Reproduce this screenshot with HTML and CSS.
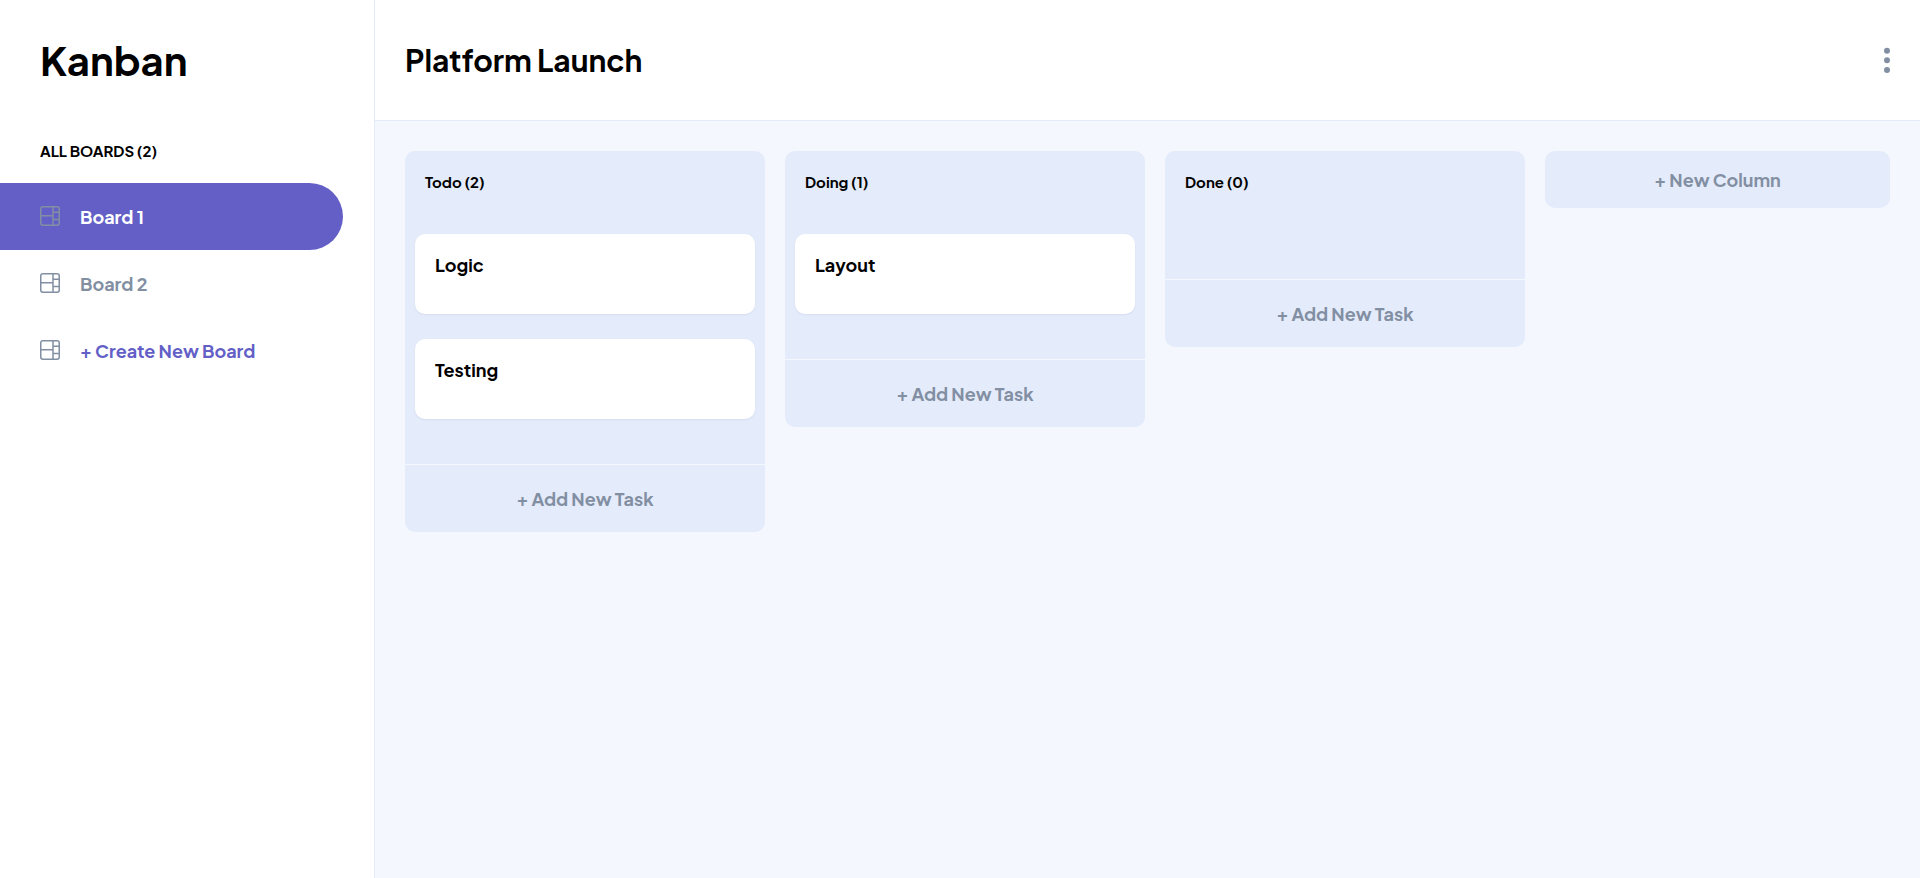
FILE: index.html
```
<!DOCTYPE html>
<html lang="en">
<head>
  <meta charset="utf-8">
  <title>Kanban</title>
  <link rel="stylesheet" href="styles.css">
</head>
<body>
  <svg width="0" height="0" class="sprite" aria-hidden="true">
    <symbol id="board-icon" viewBox="0 0 20 20">
      <rect x="0.75" y="0.75" width="18.5" height="18.5" rx="2.2"/>
      <path d="M13 0.7v18.6M0.7 9.7H13M13 6.2h6.3M13 13.6h6.3"/>
    </symbol>
  </svg>
  <div class="app">
    <aside class="sidebar">
      <h1 class="logo">Kanban</h1>
      <h2 class="boards-title">ALL BOARDS (2)</h2>
      <nav class="boards">
        <a class="board board--active"><svg class="board-icon"><use href="#board-icon"/></svg><span>Board 1</span></a>
        <a class="board"><svg class="board-icon"><use href="#board-icon"/></svg><span>Board 2</span></a>
        <a class="board board--create"><svg class="board-icon"><use href="#board-icon"/></svg><span>+ Create New Board</span></a>
      </nav>
    </aside>
    <div class="main">
      <header class="topbar">
        <h2 class="topbar-title">Platform Launch</h2>
        <svg class="menu" width="6" height="26" viewBox="0 0 6 26">
          <circle cx="3" cy="3.7" r="3"/><circle cx="3" cy="13.3" r="3"/><circle cx="3" cy="22.9" r="3"/>
        </svg>
      </header>
      <main class="columns">
        <section class="column">
          <h3 class="column-title">Todo (2)</h3>
          <div class="cards">
            <article class="card">Logic</article>
            <article class="card">Testing</article>
          </div>
          <button class="add-task">+ Add New Task</button>
        </section>
        <section class="column">
          <h3 class="column-title">Doing (1)</h3>
          <div class="cards">
            <article class="card">Layout</article>
          </div>
          <button class="add-task">+ Add New Task</button>
        </section>
        <section class="column">
          <h3 class="column-title">Done (0)</h3>
          <div class="cards"></div>
          <button class="add-task">+ Add New Task</button>
        </section>
        <button class="new-column">+ New Column</button>
      </main>
    </div>
  </div>
</body>
</html>
```

FILE: styles.css
```
* {
  box-sizing: border-box;
  margin: 0;
}

body {
  font-family: "Plus Jakarta Sans", Inter, "Liberation Sans", sans-serif;
  font-weight: 700;
  color: #000;
  background: #f4f7fe;
}

button {
  font: inherit;
  border: 0;
  padding: 0;
}

.sprite {
  display: none;
}

.app {
  display: flex;
  height: 100vh;
  overflow: hidden;
}

.sidebar {
  flex: 0 0 375px;
  padding-top: 35px;
  background: #fff;
  border-right: 1px solid #e4ebfa;
}

.logo {
  padding-left: 40px;
  font-size: 40px;
  line-height: 50px;
}

.boards-title {
  margin: 56px 0 22px;
  padding-left: 40px;
  font-size: 15px;
  line-height: 20px;
}

.board {
  display: flex;
  align-items: center;
  gap: 20px;
  width: 343px;
  height: 67px;
  padding-left: 40px;
  font-size: 18px;
  color: #828fa3;
}

.board--active {
  color: #fff;
  background: #635fc7;
  border-radius: 0 34px 34px 0;
}

.board--create {
  color: #635fc7;
}

.board-icon {
  width: 20px;
  height: 20px;
  margin-bottom: 1px;
  fill: none;
  stroke: #828fa3;
  stroke-width: 1.5;
}

.main {
  flex: 1;
  min-width: 0;
}

.topbar {
  display: flex;
  align-items: center;
  justify-content: space-between;
  height: 121px;
  padding: 0 30px;
  background: #fff;
  border-bottom: 1px solid #e4ebfa;
}

.topbar-title {
  font-size: 30px;
  line-height: 40px;
}

.menu {
  fill: #828fa3;
}

.columns {
  display: flex;
  align-items: flex-start;
  gap: 20px;
  padding: 30px;
}

.column {
  flex: 0 0 360px;
  background: #e4ebfa;
  border-radius: 10px;
}

.column-title {
  padding: 19px 20px 40px;
  font-size: 15px;
  line-height: 24px;
}

.cards {
  display: flex;
  flex-direction: column;
  gap: 25px;
  padding: 0 10px 45px;
}

.card {
  height: 80px;
  padding: 20px;
  font-size: 18px;
  line-height: 22px;
  background: #fff;
  border-radius: 10px;
  box-shadow: 0 1px 2px rgba(54, 78, 126, 0.08);
}

.add-task {
  display: block;
  width: 100%;
  height: 68px;
  font-size: 18px;
  color: #828fa3;
  background: none;
  border-top: 1px solid #f4f7fe;
}

.new-column {
  flex: 1;
  height: 57px;
  font-size: 18px;
  color: #828fa3;
  background: #e4ebfa;
  border-radius: 10px;
}
```
